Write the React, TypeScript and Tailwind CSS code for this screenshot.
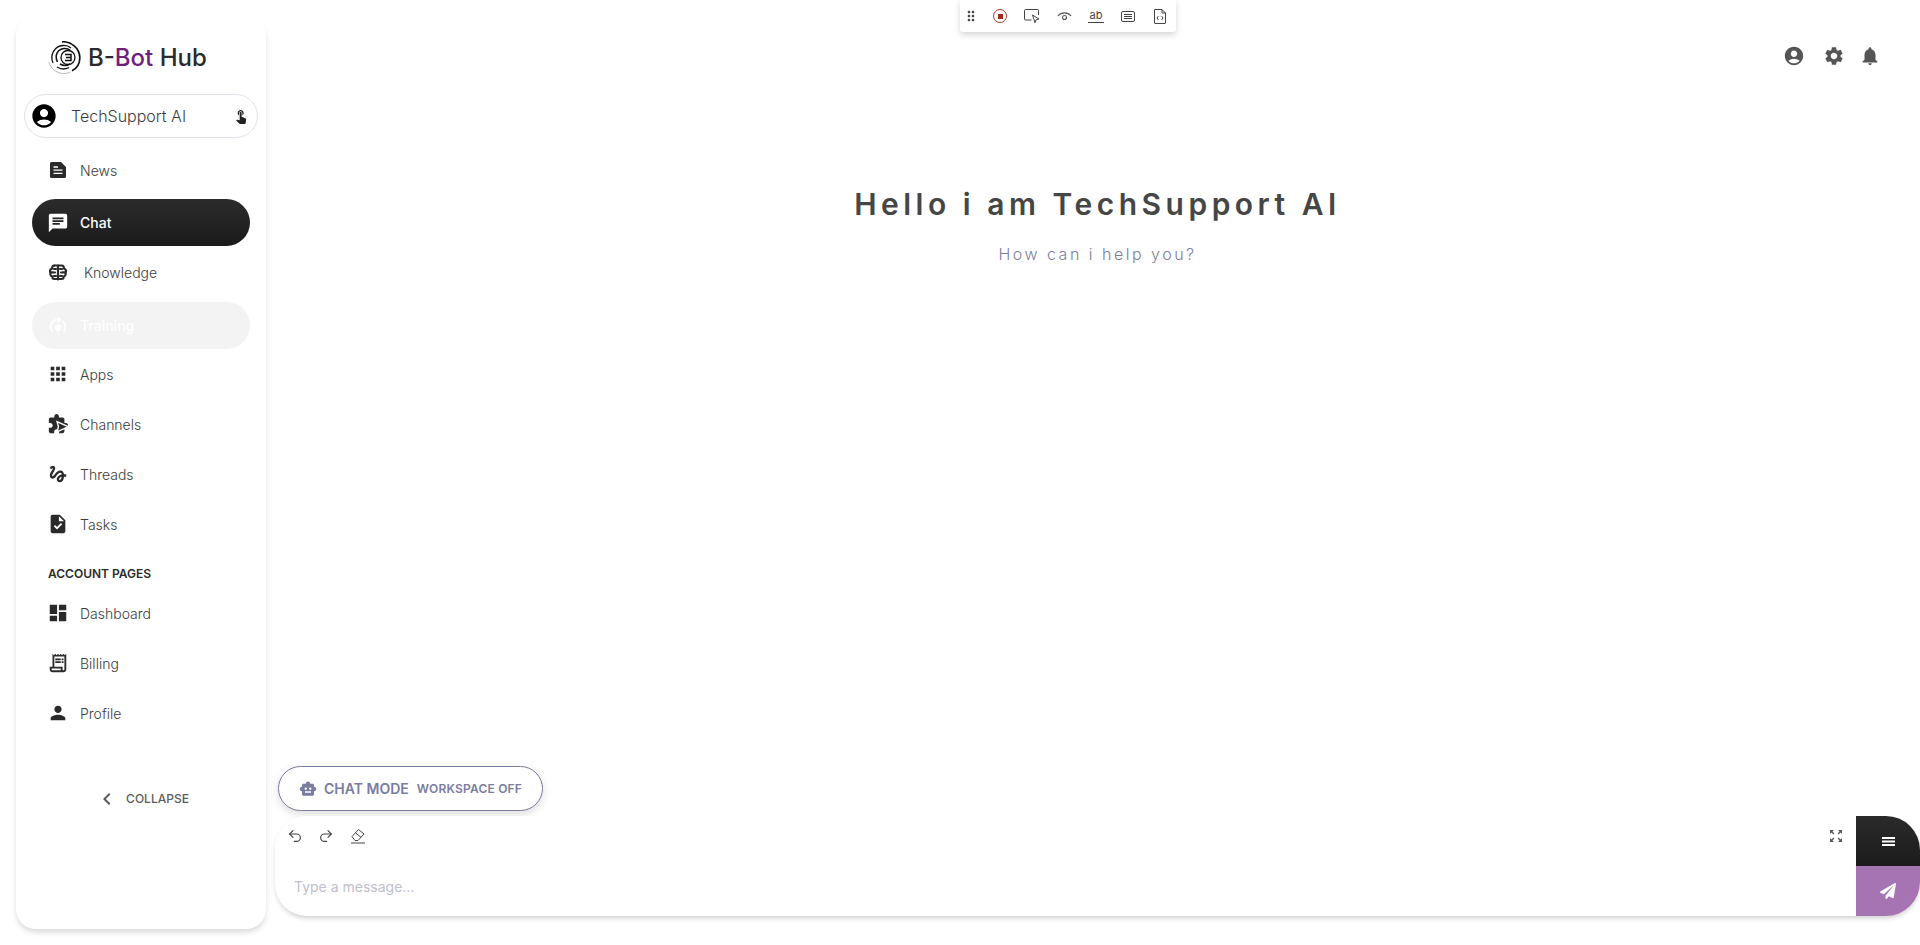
import type { ReactNode } from 'react'
import { FaPaperPlane } from 'react-icons/fa'
import { Redo2, Undo2 } from 'lucide-react'
import {
  MdAccountCircle,
  MdApps,
  MdChat,
  MdChevronLeft,
  MdDashboard,
  MdDragIndicator,
  MdGesture,
  MdModelTraining,
  MdNotifications,
  MdOutlineReceiptLong,
  MdPerson,
  MdSettings,
  MdSmartToy,
  MdTask,
  MdTouchApp,
  MdZoomOutMap,
} from 'react-icons/md'

const NavItem = ({ icon, label, indent }: { icon: ReactNode; label: string; indent?: boolean }) => (
  <div className="flex h-[50px] items-center pl-[14px] text-[14px] font-light text-[#3c3c3c]">
    <span className="flex w-[24px] justify-center text-[22px] text-[#2a2a2a]">{icon}</span>
    <span className={indent ? 'ml-[14px]' : 'ml-[10px]'}>{label}</span>
  </div>
)

const Logo = () => (
  <svg width="33" height="33" viewBox="0 0 33 33" fill="none" stroke="#111">
    <path d="M14 .8c9 -.5 17.500 6 17.800 15.500.2 6-3 11-7.800 13.500" strokeWidth="1.700" />
    <path d="M.8 21c1.800 6.500 7.500 11 14 11.500 3 .2 5.500-.4 7.500-1.500" strokeWidth="0.500" stroke="#777" />
    <path d="M5 22C1.500 14 6.500 5 15 4.500c3-.2 6 .8 8 2.500" strokeWidth="1.300" />
    <path d="M9 26c3 2 8 2.500 12 .5" strokeWidth="1.300" />
    <path d="M9.500 21C6 14 10 8 16 7.500c2-.2 4.500.4 6 1.800" strokeWidth="1.500" />
    <path d="M12 23c3 1.800 7 2 10-.2" strokeWidth="1.500" />
    <circle cx="20" cy="16.500" r="7" strokeWidth="1.300" />
    <path d="M17 13.500h6v6h-6M18 16.500h5" strokeWidth="1.500" />
  </svg>
)

const NewsIcon = () => (
  <svg width="16" height="16" viewBox="0 0 16 16">
    <path fill="#2a2a2a" d="M1.500 0H11l5 5v9.500a1.500 1.500 0 0 1-1.500 1.500h-13A1.500 1.500 0 0 1 0 14.500v-13A1.500 1.500 0 0 1 1.500 0z" />
    <path stroke="#fff" strokeWidth="1.300" d="M3.500 5H8M3.500 8.200h9M3.500 11.400h9" />
  </svg>
)

const BrainIcon = () => (
  <svg width="18" height="17" viewBox="0 0 18 17" fill="none" stroke="#2a2a2a" strokeWidth="2.200" strokeLinecap="round">
    <path d="M9 1.500v14M5.500 1.500C3.500 1.500 3 3 3.200 4.500 1.500 5 1 6 1 7c0 1 .8 1.500 1 1.500-1 .8-1 3.500 1.200 4 0 1.500 1 2.500 2.300 2.500H9" />
    <path d="M5.500 1.500H12.500c2 0 2.500 1.500 2.300 3 1.700.5 2.200 1.500 2.200 2.500 0 1-.8 1.500-1 1.500 1 .8 1 3.500-1.200 4 0 1.500-1 2.500-2.300 2.500H9" />
    <path d="M1.500 8.500H6M12 8.500h4.500M5 5h2M11 5h2M5 12h2M11 12h2" />
  </svg>
)

const ChannelsIcon = () => (
  <svg width="22" height="22" viewBox="0 0 24 24">
    <path
      fill="#2a2a2a"
      d="M20.500 11H19V7c0-1.100-.9-2-2-2h-4V3.500C13 2.120 11.880 1 10.500 1S8 2.120 8 3.500V5H4c-1.100 0-1.990.9-1.990 2v3.800H3.500c1.490 0 2.700 1.210 2.700 2.700s-1.210 2.700-2.700 2.700H2V20c0 1.100.9 2 2 2h3.800v-1.500c0-1.490 1.210-2.700 2.700-2.700 1.490 0 2.700 1.210 2.700 2.700V22H17c1.100 0 2-.9 2-2v-4h1.500c1.380 0 2.500-1.120 2.500-2.500S21.880 11 20.500 11z"
    />
    <path fill="#2a2a2a" stroke="#fff" strokeWidth="1.500" d="M11 9.500 23.500 15 11 20.500l1.500-5.500z" />
  </svg>
)

const Sidebar = () => (
  <aside className="mx-4 mt-4 flex h-[913px] w-[250px] shrink-0 flex-col rounded-[20px] bg-white shadow-[0_4px_6px_-1px_rgba(0,0,0,0.16)]">
    <div className="flex h-[78px] items-center pl-[32px] pt-[5px]">
      <Logo />
      <span className="ml-[7px] text-[24px] font-medium text-[#2b2b2b]">
        B-<span className="text-[#6f1f7f]">Bot</span> Hub
      </span>
    </div>
    <div className="mx-2 flex h-[44px] items-center rounded-full border border-[#e2e2ea] pl-[5px] pr-[8px]">
      <MdAccountCircle className="text-[28px] text-black" />
      <span className="ml-[13px] flex-1 text-[16px] font-light text-[#3c3c3c]">TechSupport AI</span>
      <MdTouchApp className="text-[16px] text-[#222]" />
    </div>
    <nav className="mx-4 mt-[7px] flex flex-col">
      <NavItem icon={<NewsIcon />} label="News" />
      <div className="mt-[4px] flex h-[47px] items-center rounded-full bg-gradient-to-b from-[#2b2b2b] to-[#1b1b1b] pl-[14px] text-[14px] font-medium text-white">
        <span className="flex w-[24px] justify-center text-[22px]">
          <MdChat />
        </span>
        <span className="ml-[10px]">Chat</span>
      </div>
      <div className="mt-[1px]">
        <NavItem icon={<BrainIcon />} label="Knowledge" indent />
      </div>
      <div className="mt-[5px] flex h-[47px] items-center rounded-full bg-[#f3f3f3] pl-[14px] text-[14px] font-medium text-white">
        <span className="flex w-[24px] justify-center text-[22px]">
          <MdModelTraining />
        </span>
        <span className="ml-[10px]">Training</span>
      </div>
      <NavItem icon={<MdApps />} label="Apps" />
      <NavItem icon={<ChannelsIcon />} label="Channels" />
      <NavItem icon={<MdGesture />} label="Threads" />
      <NavItem icon={<MdTask />} label="Tasks" />
    </nav>
    <div className="ml-[32px] mt-[11px] h-[28px] text-[12px] font-semibold leading-[28px] text-[#2b2b2b]">ACCOUNT PAGES</div>
    <div className="mx-4 flex flex-col">
      <NavItem icon={<MdDashboard />} label="Dashboard" />
      <NavItem icon={<MdOutlineReceiptLong />} label="Billing" />
      <NavItem icon={<MdPerson />} label="Profile" />
    </div>
    <div className="mt-[36px] flex h-[50px] items-center justify-center pl-[2px] text-[12px] font-medium text-[#5c5c5c]">
      <MdChevronLeft className="text-[24px]" />
      <span className="ml-[7px]">COLLAPSE</span>
    </div>
  </aside>
)

const RecorderBar = () => (
  <div className="absolute left-[960px] top-0 flex h-[32px] w-[216px] items-center rounded-b-[3px] bg-white text-[#444] shadow-[0_3px_6px_rgba(0,0,0,0.16)]">
    <span className="mr-[2px] flex w-[22px] justify-center text-[16px]">
      <MdDragIndicator />
    </span>
    <span className="flex w-[32px] justify-center">
      <span className="flex h-[14px] w-[14px] items-center justify-center rounded-full border border-[#b23a2a]">
        <span className="h-[5px] w-[5px] bg-[#a8261a]" />
      </span>
    </span>
    <span className="flex w-[32px] justify-center">
      <svg width="16" height="16" viewBox="0 0 16 16" fill="none" stroke="#444" strokeWidth="1">
        <path d="M7.500 12H1.500a1 1 0 0 1-1-1V2.500a1 1 0 0 1 1-1h12a1 1 0 0 1 1 1V7" />
        <path d="M8.500 7 15 11l-3 .8-1 3z" />
      </svg>
    </span>
    <span className="flex w-[32px] justify-center">
      <svg width="15" height="11" viewBox="0 0 15 11" fill="none" stroke="#555" strokeWidth="1.100">
        <path d="M.8 5C4.500.8 10.500.8 14.200 5" />
        <circle cx="7.500" cy="6.500" r="2" />
      </svg>
    </span>
    <span className="flex w-[32px] justify-center">
      <span className="w-[16px] border-b border-[#444] text-center text-[11px] leading-[13px]">ab</span>
    </span>
    <span className="flex w-[32px] justify-center">
      <svg width="14" height="11" viewBox="0 0 14 11" fill="none" stroke="#444" strokeWidth="1">
        <rect x="0.500" y="0.500" width="13" height="10" rx="1.500" />
        <path d="M3 3.500h8M3 5.500h8M3 7.500h8" />
      </svg>
    </span>
    <span className="flex w-[32px] justify-center">
      <svg width="12" height="15" viewBox="0 0 12 15" fill="none" stroke="#444" strokeWidth="1">
        <path d="M.5 1A.5.5 0 0 1 1 .5h7L11.500 4v10a.5.5 0 0 1-.5.5H1a.5.5 0 0 1-.5-.5z" />
        <path d="M8 .5V4h3.500M4.500 7 3 9l1.500 2M7.500 7 9 9l-1.500 2" />
      </svg>
    </span>
  </div>
)

const Composer = () => (
  <div className="ml-[-7px] flex h-[100px] overflow-hidden rounded-[32px] rounded-r-[34px] bg-white shadow-[0_3px_5px_-1px_rgba(0,0,0,0.2)]">
    <div className="flex flex-1 flex-col pl-[12px] pr-[12px]">
      <div className="flex h-[39px] items-center text-[#444]">
        <Undo2 size={16} strokeWidth={1.7} />
        <Redo2 className="ml-[15px]" size={16} strokeWidth={1.7} />
        <svg className="ml-[16px]" width="16" height="16" viewBox="0 0 16 16" fill="none" stroke="#444" strokeWidth="1">
          <path d="M2 8.500 8.500 1.500l5.500 4.500-6 6.500H5z" />
          <path d="M5.500 4.800l5.500 4.500" />
          <path d="M1 15h14" />
        </svg>
        <MdZoomOutMap className="ml-auto text-[16px] text-[#555]" />
      </div>
      <div className="mt-[21px] pl-[7px] text-[14px] text-[#c0c0cc]">Type a message...</div>
    </div>
    <div className="flex w-[64px] flex-col text-white">
      <div className="flex h-[50px] items-center justify-center bg-gradient-to-b from-[#2b2b2b] to-[#1b1b1b]">
        <svg width="13" height="9" viewBox="0 0 13 9" fill="#fff">
          <rect width="13" height="2" />
          <rect y="3.500" width="13" height="2" />
          <rect y="7" width="13" height="2" />
        </svg>
      </div>
      <div className="flex h-[50px] items-center justify-center bg-[#a674b2]">
        <FaPaperPlane className="text-[16px]" />
      </div>
    </div>
  </div>
)

export default function App() {
  return (
    <div className="relative flex h-[945px] w-full overflow-hidden bg-white font-['Inter',sans-serif]">
      <Sidebar />
      <RecorderBar />
      <main className="flex min-w-0 flex-1 flex-col pb-[29px]">
        <div className="flex h-[112px] items-start justify-end pr-[39px] pt-[45px] text-[22px] text-[#555]">
          <MdAccountCircle />
          <MdSettings className="ml-[18px]" />
          <MdNotifications className="ml-[14px]" />
        </div>
        <div className="ml-[-7px] mt-[73px] flex flex-col items-center">
          <h1 className="text-[30px] font-semibold leading-[38px] tracking-[4.500px] text-[#464646]">Hello i am TechSupport AI</h1>
          <p className="mt-[19px] text-[16px] font-light tracking-[2.500px] text-[#7d7d9c]">How can i help you?</p>
        </div>
        <div className="mt-auto">
          <div className="mb-[5px] ml-[-4px] flex h-[45px] w-[265px] items-center rounded-full border border-[#7a7ca0] bg-white pl-[20px] font-semibold text-[#7a7ca0] shadow-[0_3px_8px_rgba(0,0,0,0.14)]">
            <MdSmartToy className="text-[18px]" />
            <span className="ml-[7px] text-[14px]">CHAT MODE</span>
            <span className="ml-[8px] text-[12px] tracking-[0.200px]">WORKSPACE OFF</span>
          </div>
          <Composer />
        </div>
      </main>
    </div>
  )
}
